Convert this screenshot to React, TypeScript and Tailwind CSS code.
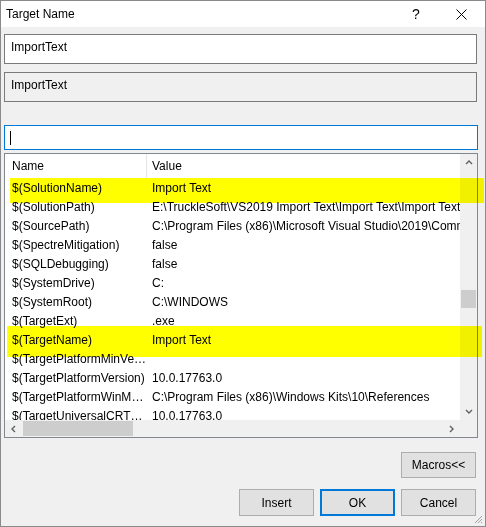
import React from 'react';

const rows: [string, string][] = [
  ['$(SolutionName)', 'Import Text'],
  ['$(SolutionPath)', 'E:\\TruckleSoft\\VS2019 Import Text\\Import Text\\Import Text\\'],
  ['$(SourcePath)', 'C:\\Program Files (x86)\\Microsoft Visual Studio\\2019\\Community\\'],
  ['$(SpectreMitigation)', 'false'],
  ['$(SQLDebugging)', 'false'],
  ['$(SystemDrive)', 'C:'],
  ['$(SystemRoot)', 'C:\\WINDOWS'],
  ['$(TargetExt)', '.exe'],
  ['$(TargetName)', 'Import Text'],
  ['$(TargetPlatformMinVersion)', ''],
  ['$(TargetPlatformVersion)', '10.0.17763.0'],
  ['$(TargetPlatformWinMDLocation)', 'C:\\Program Files (x86)\\Windows Kits\\10\\References'],
  ['$(TargetUniversalCRTVersion)', '10.0.17763.0'],
];

function Chevron({ dir }: { dir: 'up' | 'down' | 'left' | 'right' }) {
  const d = {
    up: 'M1 5 L4 2 L7 5',
    down: 'M1 2 L4 5 L7 2',
    left: 'M5 1 L2 4 L5 7',
    right: 'M2 1 L5 4 L2 7',
  }[dir];
  return (
    <svg width="8" height="8" viewBox="0 0 8 8" className="block">
      <path d={d} fill="none" stroke="#606060" strokeWidth={1.4} />
    </svg>
  );
}

function Button({ label, primary }: { label: string; primary?: boolean }) {
  return (
    <div
      className={`w-[75px] h-[27px] flex items-center justify-center bg-[#e1e1e1] text-black ${
        primary ? 'border-2 border-[#0078d7]' : 'border border-[#adadad]'
      }`}
    >
      {label}
    </div>
  );
}

export default function App() {
  return (
    <div
      className="relative w-[486px] h-[527px] bg-[#f0f0f0] border border-[#8a8a8a] flex flex-col text-[12px] text-black overflow-hidden"
      style={{ fontFamily: '"Liberation Sans", Arial, sans-serif' }}
    >
      {/* Title bar */}
      <div className="h-[26px] bg-white flex items-center pl-[5px] shrink-0">
        <span className="flex-1">Target Name</span>
        <span className="w-[40px] text-center text-[14px] leading-none mr-[20px]">?</span>
        <svg width="11" height="11" viewBox="0 0 11 11" className="mr-[18px]">
          <path d="M0.5 0.5 L10.5 10.5 M10.5 0.5 L0.5 10.5" stroke="#000" strokeWidth={1} />
        </svg>
      </div>

      <div className="flex flex-col pl-[3px]">
        <div className="mt-[7px] w-[473px] h-[30px] bg-white border border-[#7a7a7a] px-[6px] pt-[3px]">
          ImportText
        </div>
        <div className="mt-[8px] w-[473px] h-[30px] bg-[#f0f0f0] border border-[#7a7a7a] px-[6px] pt-[3px]">
          ImportText
        </div>

        {/* Search box */}
        <div className="mt-[23px] w-[474px] h-[25px] bg-white border border-[#0078d7] flex items-center pl-[5px]">
          <div className="w-px h-[14px] bg-black" />
        </div>

        {/* List */}
        <div className="mt-[3px] w-[474px] h-[285px] bg-white border border-[#828790] grid grid-cols-[455px_17px] grid-rows-[266px_17px]">
          <div className="overflow-hidden">
            <div className="h-[24px] flex items-center">
              <div className="w-[142px] h-full flex items-center pl-[7px] border-r border-[#e5e5e5]">Name</div>
              <div className="pl-[5px]">Value</div>
            </div>
            {rows.map(([name, value]) => (
              <div key={name} className="h-[19px] flex items-center">
                <div className="w-[142px] pl-[7px] truncate">{name}</div>
                <div className="pl-[5px] flex-1 whitespace-nowrap overflow-hidden">{value}</div>
              </div>
            ))}
          </div>

          {/* Vertical scrollbar */}
          <div className="bg-[#f0f0f0] flex flex-col items-center">
            <div className="h-[17px] flex items-center justify-center">
              <Chevron dir="up" />
            </div>
            <div className="flex-1 w-full">
              <div className="mt-[119px] mx-auto w-[15px] h-[18px] bg-[#cdcdcd]" />
            </div>
            <div className="h-[17px] flex items-center justify-center">
              <Chevron dir="down" />
            </div>
          </div>

          {/* Horizontal scrollbar */}
          <div className="bg-[#f0f0f0] flex items-center">
            <div className="w-[17px] h-full flex items-center justify-center">
              <Chevron dir="left" />
            </div>
            <div className="flex-1 h-full flex items-center">
              <div className="ml-[1px] w-[110px] h-[15px] bg-[#cdcdcd]" />
            </div>
            <div className="w-[17px] h-full flex items-center justify-center">
              <Chevron dir="right" />
            </div>
          </div>
          <div className="bg-[#f0f0f0]" />
        </div>

        {/* Buttons */}
        <div className="mt-[14px] w-[472px] flex justify-end">
          <div className="w-[75px] h-[26px] flex items-center justify-center bg-[#e1e1e1] border border-[#adadad]">
            Macros&lt;&lt;
          </div>
        </div>
        <div className="mt-[11px] w-[472px] flex justify-end gap-[6px]">
          <Button label="Insert" />
          <Button label="OK" primary />
          <Button label="Cancel" />
        </div>
      </div>

      {/* Resize grip */}
      <svg width="10" height="10" viewBox="0 0 10 10" className="absolute right-[2px] bottom-[2px]">
        <path d="M9 2 L2 9 M9 5 L5 9 M9 8 L8 9" stroke="#a0a0a0" strokeWidth={1} />
      </svg>

      {/* Yellow highlight overlays */}
      <div className="absolute left-[9px] top-[177px] w-[474px] h-[25px] bg-[#ffff00] mix-blend-multiply pointer-events-none" />
      <div className="absolute left-[6px] top-[325px] w-[475px] h-[31px] bg-[#ffff00] mix-blend-multiply pointer-events-none" />
    </div>
  );
}
